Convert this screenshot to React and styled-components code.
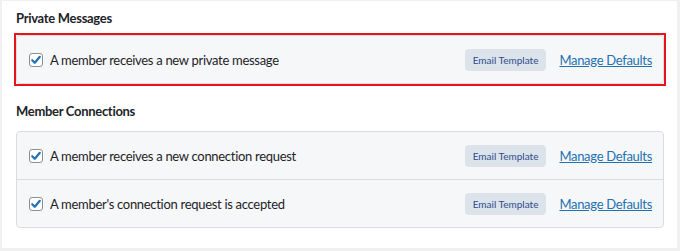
import React from 'react';
import styled, { createGlobalStyle } from 'styled-components';

const GlobalStyle = createGlobalStyle`
	body {
		margin: 0;
		background: #f0f0f1;
		font-family: Lato, 'Noto Sans', sans-serif;
	}
`;

const sections = [
	{
		title: 'Private Messages',
		highlight: true,
		items: ['A member receives a new private message'],
	},
	{
		title: 'Member Connections',
		items: [
			'A member receives a new connection request',
			"A member's connection request is accepted",
		],
	},
];

const Checkbox = () => (
	<Check>
		<svg width="12" height="12" viewBox="0 0 12 12">
			<path
				d="M2.2 6.2 L4.8 8.8 L9.8 2.8"
				fill="none"
				stroke="#2271b1"
				strokeWidth="2.2"
				strokeLinecap="round"
				strokeLinejoin="round"
			/>
		</svg>
	</Check>
);

export default function App() {
	return (
		<>
			<GlobalStyle />
			<Card>
				{sections.map((section) => (
					<Section key={section.title}>
						<Heading>{section.title}</Heading>
						<Box highlight={section.highlight}>
							{section.items.map((item) => (
								<Row key={item}>
									<Label>
										<Checkbox />
										{item}
									</Label>
									<Actions>
										<Badge>Email Template</Badge>
										<Link href="#">Manage Defaults</Link>
									</Actions>
								</Row>
							))}
						</Box>
					</Section>
				))}
			</Card>
		</>
	);
}

const Card = styled.div`
	margin: 1px 3px 0 2px;
	height: 247px;
	box-sizing: border-box;
	background: #fff;
	padding: 7px 13px 0 14px;
	display: flex;
	flex-direction: column;
	gap: 17px;
`;

const Section = styled.div`
	display: flex;
	flex-direction: column;
	gap: 7px;
	& + & {
		gap: 10px;
	}
`;

const Heading = styled.h3`
	margin: 0;
	font-size: 13px;
	line-height: 20px;
	font-weight: 700;
	letter-spacing: -0.3px;
	color: #1d2327;
`;

// red annotation frame drawn over the highlighted box
const Box = styled.div`
	position: relative;
	background: #f6f7f8;
	border: 1px solid #dcdcde;
	border-radius: 4px;
	&::after {
		content: '';
		display: ${({ highlight }) => (highlight ? 'block' : 'none')};
		position: absolute;
		inset: -3px;
		border: 2px solid #e8141c;
		pointer-events: none;
	}
`;

const Row = styled.div`
	height: 47px;
	padding: 0 11px 0 12px;
	display: flex;
	align-items: center;
	justify-content: space-between;
	& + & {
		border-top: 1px solid #dcdcde;
	}
`;

const Label = styled.label`
	display: flex;
	align-items: center;
	gap: 7px;
	font-size: 13px;
	letter-spacing: -0.3px;
	color: #1d2327;
`;

const Check = styled.span`
	width: 14px;
	height: 14px;
	box-sizing: border-box;
	border: 1px solid #8c8f94;
	border-radius: 3px;
	background: #fff;
	display: flex;
	align-items: center;
	justify-content: center;
`;

const Actions = styled.div`
	display: flex;
	align-items: center;
	gap: 13px;
`;

const Badge = styled.span`
	height: 22px;
	padding: 0 8px;
	display: flex;
	align-items: center;
	background: #dde3ea;
	border-radius: 4px;
	font-size: 10px;
	color: #2a4c8c;
`;

const Link = styled.a`
	font-size: 13px;
	letter-spacing: -0.3px;
	color: #2271b1;
	text-decoration: underline;
`;
